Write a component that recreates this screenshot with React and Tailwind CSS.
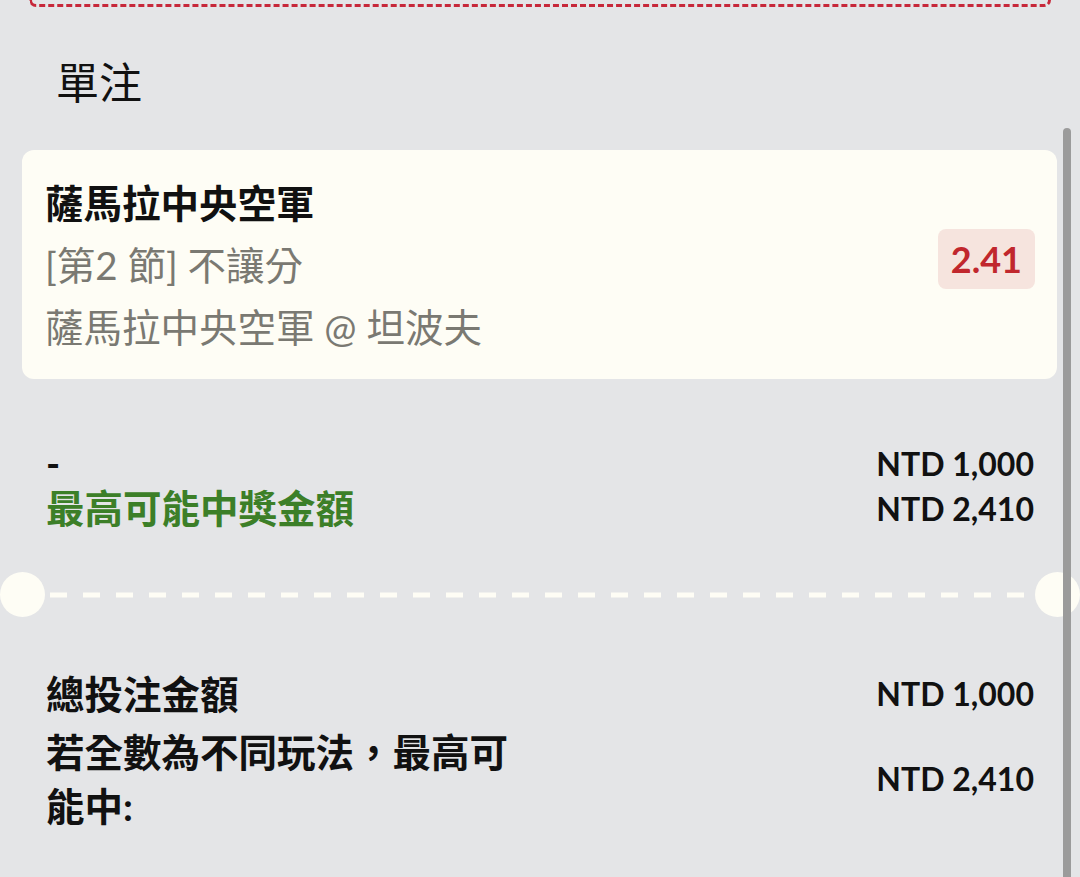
import React from "react"

const FONT = "font-['Lato','Noto_Sans_CJK_TC',sans-serif]"

function ValueRow({ left, right, leftClass = "", lh = "leading-[45px]" }) {
    return (
        <div className={`flex justify-between items-center ${lh}`}>
            <div className={leftClass}>{left}</div>
            <div className="text-[32px] font-bold text-[#111]">{right}</div>
        </div>
    )
}

export default function App() {
    return (
        <div className={`relative h-[877px] w-[1080px] overflow-hidden bg-[#e4e5e7] ${FONT}`}>
            {/* tail end of the box above, scrolled mostly out of view */}
            <div className="mx-[29px] h-[7px] border-[3px] border-t-0 border-dashed border-[#c7283a] rounded-b-[14px]" />

            <h2 className="mt-[54px] ml-[56px] text-[43px] leading-[44px] text-[#111]">單注</h2>

            {/* selection card */}
            <div className="mt-[45px] mx-[22px] mr-[23px] rounded-[12px] bg-[#fefdf5] pl-[23px] pr-[22px] pt-[22px] pb-[21px] flex items-center justify-between">
                <div className="text-[38.5px] leading-[62px]">
                    <p className="font-bold text-[#111]">薩馬拉中央空軍</p>
                    <p className="text-[#7a7972]">[第2 節] 不讓分</p>
                    <p className="text-[#7a7972]">薩馬拉中央空軍 @ 坦波夫</p>
                </div>
                <div className="mb-[13px] rounded-[8px] bg-[#f6e4de] px-[13px] h-[60px] flex items-center text-[36px] font-bold text-[#c1272d]">
                    2.41
                </div>
            </div>

            {/* stake / potential win */}
            <div className="mt-[62px] px-[46px]">
                <ValueRow left="-" leftClass="text-[38px] font-bold text-[#111]" right="NTD 1,000" />
                <ValueRow left="最高可能中獎金額" leftClass="text-[38.5px] font-bold text-[#3c7f28]" right="NTD 2,410" />
            </div>

            {/* ticket perforation */}
            <div className="mt-[41px] flex items-center h-[45px]">
                <div className="w-[45px] h-[45px] shrink-0 rounded-full bg-[#fefdf5]" />
                <svg className="flex-1 h-[6px] mx-[4px]" preserveAspectRatio="none">
                    <line x1="1" y1="3" x2="100%" y2="3" stroke="#fefdf5" strokeWidth="5" strokeDasharray="17 16" />
                </svg>
                <div className="w-[45px] h-[45px] shrink-0 rounded-full bg-[#fefdf5]" />
            </div>

            {/* totals */}
            <div className="mt-[50px] px-[46px] text-[#111]">
                <ValueRow left="總投注金額" leftClass="text-[38.5px] font-bold" right="NTD 1,000" lh="leading-[54px]" />
                <div className="mt-[4px] flex justify-between items-center">
                    <div className="w-[494px] text-[38.5px] font-bold leading-[54px]">若全數為不同玩法，最高可能中:</div>
                    <div className="text-[32px] font-bold">NTD 2,410</div>
                </div>
            </div>

            {/* overlay scrollbar */}
            <div className="absolute right-[9px] top-[128px] bottom-0 w-[8px] rounded-t-full bg-[#9b9b9b]" />
        </div>
    )
}
